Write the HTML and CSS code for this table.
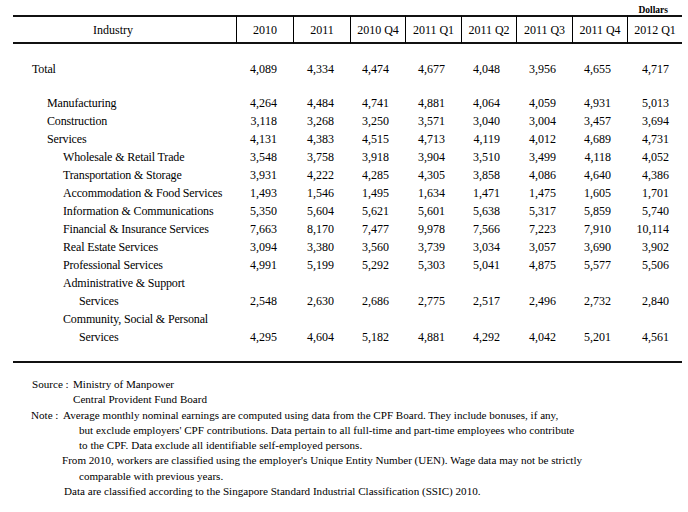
FILE: index.html
```html
<!DOCTYPE html>
<html>
<head>
<meta charset="utf-8">
<link rel="stylesheet" href="styles.css">
</head>
<body>
<div class="page">
  <div class="unit">Dollars</div>
  <table class="data">
    <colgroup>
      <col class="c-ind"><col class="c-yr"><col class="c-yr"><col class="c-q"><col class="c-q2"><col class="c-q"><col class="c-q2"><col class="c-q"><col class="c-q">
    </colgroup>
    <thead>
      <tr>
        <th class="ind">Industry</th><th>2010</th><th>2011</th><th>2010 Q4</th><th>2011 Q1</th><th>2011 Q2</th><th>2011 Q3</th><th>2011 Q4</th><th>2012 Q1</th>
      </tr>
    </thead>
    <tbody>
      <tr class="total"><td class="l0">Total</td><td>4,089</td><td>4,334</td><td>4,474</td><td>4,677</td><td>4,048</td><td>3,956</td><td>4,655</td><td>4,717</td></tr>
      <tr><td class="l1">Manufacturing</td><td>4,264</td><td>4,484</td><td>4,741</td><td>4,881</td><td>4,064</td><td>4,059</td><td>4,931</td><td>5,013</td></tr>
      <tr><td class="l1">Construction</td><td>3,118</td><td>3,268</td><td>3,250</td><td>3,571</td><td>3,040</td><td>3,004</td><td>3,457</td><td>3,694</td></tr>
      <tr><td class="l1">Services</td><td>4,131</td><td>4,383</td><td>4,515</td><td>4,713</td><td>4,119</td><td>4,012</td><td>4,689</td><td>4,731</td></tr>
      <tr><td class="l2">Wholesale &amp; Retail Trade</td><td>3,548</td><td>3,758</td><td>3,918</td><td>3,904</td><td>3,510</td><td>3,499</td><td>4,118</td><td>4,052</td></tr>
      <tr><td class="l2">Transportation &amp; Storage</td><td>3,931</td><td>4,222</td><td>4,285</td><td>4,305</td><td>3,858</td><td>4,086</td><td>4,640</td><td>4,386</td></tr>
      <tr><td class="l2">Accommodation &amp; Food Services</td><td>1,493</td><td>1,546</td><td>1,495</td><td>1,634</td><td>1,471</td><td>1,475</td><td>1,605</td><td>1,701</td></tr>
      <tr><td class="l2">Information &amp; Communications</td><td>5,350</td><td>5,604</td><td>5,621</td><td>5,601</td><td>5,638</td><td>5,317</td><td>5,859</td><td>5,740</td></tr>
      <tr><td class="l2">Financial &amp; Insurance Services</td><td>7,663</td><td>8,170</td><td>7,477</td><td>9,978</td><td>7,566</td><td>7,223</td><td>7,910</td><td>10,114</td></tr>
      <tr><td class="l2">Real Estate Services</td><td>3,094</td><td>3,380</td><td>3,560</td><td>3,739</td><td>3,034</td><td>3,057</td><td>3,690</td><td>3,902</td></tr>
      <tr><td class="l2">Professional Services</td><td>4,991</td><td>5,199</td><td>5,292</td><td>5,303</td><td>5,041</td><td>4,875</td><td>5,577</td><td>5,506</td></tr>
      <tr><td class="l2">Administrative &amp; Support</td><td></td><td></td><td></td><td></td><td></td><td></td><td></td><td></td></tr>
      <tr><td class="l3">Services</td><td>2,548</td><td>2,630</td><td>2,686</td><td>2,775</td><td>2,517</td><td>2,496</td><td>2,732</td><td>2,840</td></tr>
      <tr><td class="l2">Community, Social &amp; Personal</td><td></td><td></td><td></td><td></td><td></td><td></td><td></td><td></td></tr>
      <tr class="last"><td class="l3">Services</td><td>4,295</td><td>4,604</td><td>5,182</td><td>4,881</td><td>4,292</td><td>4,042</td><td>5,201</td><td>4,561</td></tr>
    </tbody>
  </table>
  <div class="notes">
    <div class="src"><span class="lbl-src">Source :</span>Ministry of Manpower</div>
    <div class="src-cont">Central Provident Fund Board</div>
    <div><span class="lbl-note">Note :</span>Average monthly nominal earnings are computed using data from the CPF Board. They include bonuses, if any,</div>
    <div class="cont">but exclude employers' CPF contributions. Data pertain to all full-time and part-time employees who contribute</div>
    <div class="cont">to the CPF. Data exclude all identifiable self-employed persons.</div>
    <div class="from">From 2010, workers are classified using the employer's Unique Entity Number (UEN). Wage data may not be strictly</div>
    <div class="cont">comparable with previous years.</div>
    <div class="data-line">Data are classified according to the Singapore Standard Industrial Classification (SSIC) 2010.</div>
  </div>
</div>
</body>
</html>
```

FILE: styles.css
```css
html, body {
  margin: 0;
  padding: 0;
  background: #fff;
}
body {
  font-family: "Liberation Serif", "Times New Roman", serif;
  color: #000;
}
.page {
  padding: 0 6px 0 13px;
  width: 669px;
}
.unit {
  height: 15px;
  box-sizing: border-box;
  padding-top: 5px;
  padding-right: 14px;
  text-align: right;
  font-size: 9.5px;
  font-weight: bold;
  line-height: 10px;
}
.data {
  border-collapse: separate;
  border-spacing: 0;
  table-layout: fixed;
  width: 669px;
  font-size: 12px;
}
.c-ind { width: 223px; }
.c-yr { width: 57px; }
.c-q { width: 55px; }
.c-q2 { width: 56px; }
.data th {
  font-weight: normal;
  border-top: 2px solid #111;
  border-bottom: 2px solid #111;
  border-left: 1px solid #000;
  padding: 2px 0 0 0;
  line-height: 23px;
  text-align: center;
  white-space: nowrap;
}
.data th.ind {
  border-left: none;
  padding-right: 23px;
}
.data td {
  padding: 0 16px 0 0;
  line-height: 18px;
  height: 18px;
  text-align: right;
  white-space: nowrap;
}
.data td:last-child {
  padding-right: 13px;
}
.data td.l0, .data td.l1, .data td.l2, .data td.l3 {
  text-align: left;
  padding-right: 0;
  letter-spacing: -0.15px;
}
.data td.l0 { padding-left: 19px; }
.data td.l1 { padding-left: 34px; }
.data td.l2 { padding-left: 50px; }
.data td.l3 { padding-left: 66px; }
.data tr.total td {
  padding-top: 16px;
  padding-bottom: 16px;
}
.data tr.last td {
  padding-bottom: 15px;
  border-bottom: 2px solid #111;
}
.notes {
  margin-top: 14px;
  padding-left: 18px;
  font-size: 11.1px;
  line-height: 15.3px;
  white-space: nowrap;
}
.src { padding-left: 1px; }
.lbl-src {
  display: inline-block;
  width: 41px;
}
.src-cont { padding-left: 42px; }
.lbl-note {
  display: inline-block;
  width: 32px;
}
.cont { padding-left: 48px; }
.from { padding-left: 31px; }
.data-line { padding-left: 33px; }
```
